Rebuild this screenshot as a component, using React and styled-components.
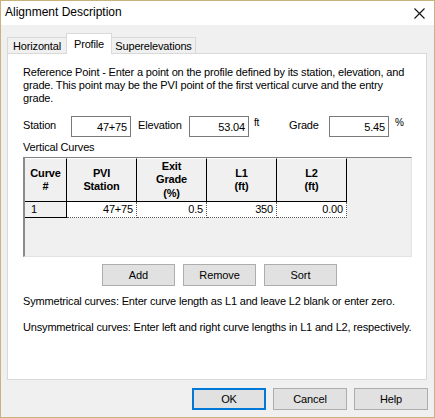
import React from "react";
import styled, { createGlobalStyle } from "styled-components";

const GlobalStyle = createGlobalStyle`
  html, body {
    margin: 0;
    padding: 0;
    background: #f0f0f0;
  }
  * {
    box-sizing: border-box;
  }
`;

const columns = [
  { key: "station", title: ["PVI", "Station"] },
  { key: "grade", title: ["Exit", "Grade", "(%)"] },
  { key: "l1", title: ["L1", "(ft)"] },
  { key: "l2", title: ["L2", "(ft)"] },
];

const rows = [{ id: 1, station: "47+75", grade: "0.5", l1: "350", l2: "0.00" }];

export default function App() {
  return (
    <>
      <GlobalStyle />
      <Window>
        <TitleBar>
          <Title>Alignment Description</Title>
          <CloseIcon width="11" height="11" viewBox="0 0 11 11">
            <path d="M0.5 0.5 L10.5 10.5 M10.5 0.5 L0.5 10.5" stroke="#111" strokeWidth="1.1" />
          </CloseIcon>
        </TitleBar>
        <Body>
          <Tabs>
            <Tab w={60}>Horizontal</Tab>
            <Tab w={46} active>Profile</Tab>
            <Tab w={85}>Superelevations</Tab>
          </Tabs>
          <Panel>
            <Paragraph>
              Reference Point - Enter a point on the profile defined by its station, elevation, and
              grade. This point may be the PVI point of the first vertical curve and the entry
              grade.
            </Paragraph>
            <FieldRow>
              <Label>Station</Label>
              <ValueBox>47+75</ValueBox>
              <Label indent={7}>Elevation</Label>
              <ValueBox>53.04</ValueBox>
              <Unit indent={5}>ft</Unit>
              <Label>Grade</Label>
              <ValueBox>5.45</ValueBox>
              <Unit indent={6}>%</Unit>
            </FieldRow>
            <SectionLabel>Vertical Curves</SectionLabel>
            <Grid>
              <GridTable>
                <HeadCell>
                  <span>Curve</span>
                  <span>#</span>
                </HeadCell>
                {columns.map((c) => (
                  <HeadCell key={c.key}>
                    {c.title.map((t) => (
                      <span key={t}>{t}</span>
                    ))}
                  </HeadCell>
                ))}
                {rows.map((r) => (
                  <React.Fragment key={r.id}>
                    <RowHead>{r.id}</RowHead>
                    {columns.map((c) => (
                      <DataCell key={c.key}>{r[c.key]}</DataCell>
                    ))}
                  </React.Fragment>
                ))}
              </GridTable>
            </Grid>
            <ButtonRow>
              <Button w={73}>Add</Button>
              <Button w={73}>Remove</Button>
              <Button w={73}>Sort</Button>
            </ButtonRow>
            <Note>Symmetrical curves: Enter curve length as L1 and leave L2 blank or enter zero.</Note>
            <Note gap={13}>
              Unsymmetrical curves: Enter left and right curve lengths in L1 and L2, respectively.
            </Note>
          </Panel>
          <Footer>
            <Button primary>OK</Button>
            <Button>Cancel</Button>
            <Button>Help</Button>
          </Footer>
        </Body>
      </Window>
    </>
  );
}

const Window = styled.div`
  width: 435px;
  height: 418px;
  border: 1px solid #c9b37b;
  background: #f0f0f0;
  display: flex;
  flex-direction: column;
  font-family: "Liberation Sans", Arial, sans-serif;
  font-size: 11px;
  letter-spacing: -0.17px;
  color: #000;
`;

const TitleBar = styled.div`
  height: 24px;
  background: #fff;
  display: flex;
  align-items: center;
  justify-content: space-between;
  padding: 0 9px 2px 4px;
  letter-spacing: 0;
`;

const Title = styled.div`
  font-size: 12px;
  font-family: "Liberation Sans", Arial, sans-serif;
`;

const CloseIcon = styled.svg`
  display: block;
  margin-top: 2px;
`;

const Body = styled.div`
  flex: 1;
  display: flex;
  flex-direction: column;
  padding: 8px 7px 7px 6px;
`;

const Tabs = styled.div`
  display: flex;
  align-items: flex-end;
  height: 20px;
  position: relative;
  z-index: 1;
`;

const Tab = styled.div`
  width: ${({ w }) => w}px;
  height: ${({ active }) => (active ? "21px" : "16px")};
  margin-bottom: ${({ active }) => (active ? "-1px" : "0")};
  padding: ${({ active }) => (active ? "3px 0 0 0" : "1px 0 0 0")};
  background: ${({ active }) => (active ? "#fff" : "#f0f0f0")};
  border: 1px solid #d9d9d9;
  border-bottom: none;
  text-align: center;
  font-size: 11px;
  line-height: 14px;
  white-space: nowrap;
  & + & {
    margin-left: -1px;
  }
`;

const Panel = styled.div`
  flex: 1;
  background: #fff;
  border: 1px solid #d9d9d9;
  padding: 12px 6px 0 15px;
  display: flex;
  flex-direction: column;
`;

const Paragraph = styled.p`
  margin: 0;
  line-height: 13px;
  width: 392px;
`;

const FieldRow = styled.div`
  display: grid;
  grid-template-columns: 48px 60px 58px 60px 40px 40px 60px auto;
  align-items: start;
  margin-top: 11px;
`;

const Label = styled.div`
  padding-top: 3px;
  padding-left: ${({ indent }) => indent || 0}px;
  line-height: 13px;
`;

const Unit = styled.div`
  padding-left: ${({ indent }) => indent || 0}px;
  line-height: 13px;
  font-size: 10px;
`;

const ValueBox = styled.div`
  height: 21px;
  border: 1px solid #7a7a7a;
  background: #fff;
  text-align: right;
  padding: 4px 3px 0 0;
  line-height: 13px;
`;

const SectionLabel = styled.div`
  margin-top: 4px;
  line-height: 13px;
`;

const Grid = styled.div`
  margin-top: 3px;
  height: 100px;
  width: 389px;
  background: #f0f0f0;
  border-top: 1px solid #828282;
  border-left: 2px solid #8a8a8a;
  border-right: 1px solid #e3e3e3;
  border-bottom: 1px solid #e3e3e3;
`;

const GridTable = styled.div`
  display: grid;
  grid-template-columns: 42px repeat(4, 70px);
  grid-template-rows: 44px 16px;
  width: max-content;
`;

const HeadCell = styled.div`
  background: #f0f0f0;
  border-top: 1px solid #fff;
  border-right: 1px solid #000;
  border-bottom: 1px solid #000;
  display: flex;
  flex-direction: column;
  align-items: center;
  justify-content: center;
  font-weight: bold;
  line-height: 13.5px;
`;

const RowHead = styled.div`
  background: #f0f0f0;
  border-right: 1px solid #000;
  border-bottom: 1px solid #000;
  padding: 1px 0 0 6px;
  line-height: 13px;
`;

const DataCell = styled.div`
  background: #fff;
  border-right: 1px dotted #555;
  border-bottom: 1px dotted #555;
  text-align: right;
  padding: 1px 3px 0 0;
  line-height: 13px;
`;

const ButtonRow = styled.div`
  display: flex;
  justify-content: center;
  gap: 8px;
  margin-top: 7px;
  width: 389px;
  padding-left: 4px;
`;

const Button = styled.button`
  width: ${({ w }) => w || 74}px;
  height: 22px;
  margin: 0;
  padding: 0;
  background: #e1e1e1;
  border: ${({ primary }) => (primary ? "2px solid #0078d7" : "1px solid #adadad")};
  font-family: "Liberation Sans", Arial, sans-serif;
  font-size: 11px;
  letter-spacing: -0.1px;
  color: #000;
`;

const Note = styled.p`
  margin: ${({ gap }) => gap || 9}px 0 0;
  line-height: 13px;
  white-space: nowrap;
`;

const Footer = styled.div`
  display: flex;
  justify-content: flex-end;
  gap: 7px;
  margin-top: 8px;
  margin-right: -1px;
`;
